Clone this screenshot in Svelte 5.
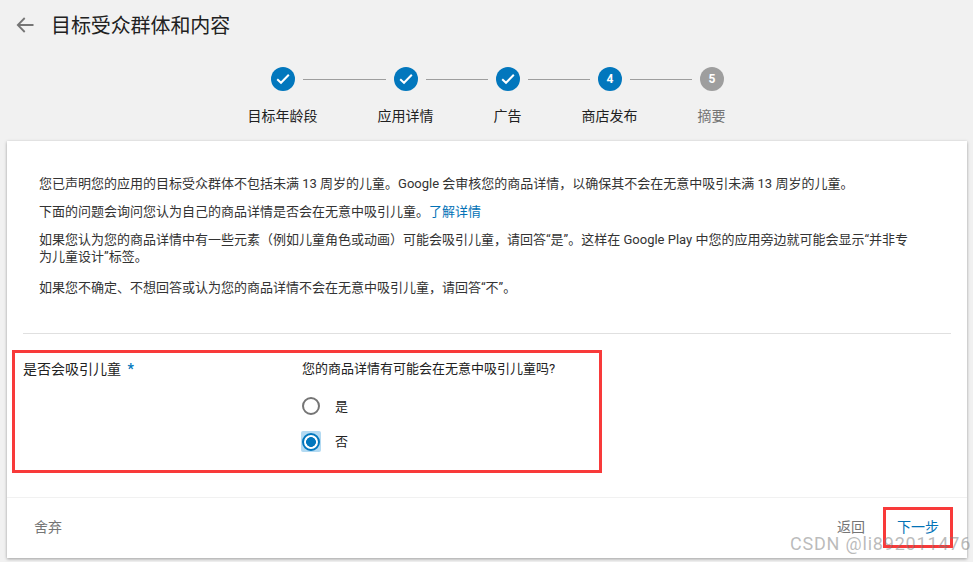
<script lang="ts">
  const steps = [
    { label: "目标年龄段", width: 70, state: "done" },
    { label: "应用详情", width: 56, state: "done" },
    { label: "广告", width: 28, state: "done" },
    { label: "商店发布", width: 56, state: "active" },
    { label: "摘要", width: 28, state: "todo" },
  ];

  function lineWidth(i: number) {
    return (steps[i].width + steps[i + 1].width) / 2 + 60 - 40;
  }
</script>

<div class="page">
  <header class="head">
    <svg class="head__back" width="18" height="16" viewBox="0 0 18 16" fill="none" stroke="#757575" stroke-width="1.8">
      <path d="M17.5 8H2M8.7 1 1.8 8l6.9 7" />
    </svg>
    <h1>目标受众群体和内容</h1>
  </header>

  <div class="stepper">
    <div class="stepper__track" style={`padding-left: ${(steps[0].width - 24) / 2}px`}>
      {#each steps as step, i}
        <span class="dot dot--{step.state}">
          {#if step.state === "done"}
            <svg width="14" height="12" viewBox="0 0 14 12" fill="none" stroke="#fff" stroke-width="2">
              <path d="M1.2 6.2 5 9.8 12.8 1.8" />
            </svg>
          {:else}
            {i + 1}
          {/if}
        </span>
        {#if i < steps.length - 1}
          <span class="line" style={`width: ${lineWidth(i)}px`}></span>
        {/if}
      {/each}
    </div>
    <div class="stepper__labels">
      {#each steps as step}
        <span class:muted={step.state === "todo"}>{step.label}</span>
      {/each}
    </div>
  </div>

  <main class="card">
    <section class="intro">
      <p>您已声明您的应用的目标受众群体不包括未满 13 周岁的儿童。Google 会审核您的商品详情，以确保其不会在无意中吸引未满 13 周岁的儿童。</p>
      <p>下面的问题会询问您认为自己的商品详情是否会在无意中吸引儿童。<a href="#more">了解详情</a></p>
      <p class="wrapped">如果您认为您的商品详情中有一些元素（例如儿童角色或动画）可能会吸引儿童，请回答“是”。这样在 Google Play 中您的应用旁边就可能会显示“并非专为儿童设计”标签。</p>
      <p>如果您不确定、不想回答或认为您的商品详情不会在无意中吸引儿童，请回答“不”。</p>
    </section>

    <section class="form">
      <div class="form__label">是否会吸引儿童 <span class="req">*</span></div>
      <div class="form__field">
        <div class="question">您的商品详情有可能会在无意中吸引儿童吗?</div>
        <div class="option">
          <span class="radio"></span>
          <span>是</span>
        </div>
        <div class="option">
          <span class="focus"><span class="radio radio--on"></span></span>
          <span>否</span>
        </div>
      </div>
    </section>

    <footer class="foot">
      <button class="btn">舍弃</button>
      <div class="foot__right">
        <button class="btn">返回</button>
        <button class="btn btn--next">下一步</button>
      </div>
    </footer>
  </main>

  <div class="mark mark--form"></div>
  <div class="mark mark--next"></div>
  <div class="watermark">CSDN @li892011476</div>
</div>

<style>
  :global(body) {
    background: #f1f1f1;
  }
  .page {
    position: relative;
    width: 973px;
    height: 562px;
    overflow: hidden;
    background: #f1f1f1;
    color: #212121;
    font-family: Roboto, "Noto Sans CJK SC", sans-serif;
    font-size: 13px;
  }
  .head {
    display: flex;
    align-items: center;
    height: 52px;
    padding-left: 16px;
  }
  .head__back {
    margin-right: 17px;
    margin-top: -3px;
  }
  h1 {
    margin: 0;
    font-size: 20px;
    font-weight: 400;
    line-height: 52px;
    letter-spacing: -0.1px;
  }
  .stepper {
    display: flex;
    flex-direction: column;
    align-items: center;
    height: 89px;
    padding-top: 15px;
    box-sizing: border-box;
  }
  .stepper__track {
    display: flex;
    align-items: center;
    align-self: flex-start;
    margin-left: 248px;
  }
  .dot {
    display: flex;
    align-items: center;
    justify-content: center;
    width: 24px;
    height: 24px;
    border-radius: 50%;
    background: #0277bd;
    color: #fff;
    font-size: 12px;
    font-weight: 700;
  }
  .dot--todo {
    background: #9e9e9e;
  }
  .line {
    height: 1px;
    margin: 0 8px;
    background: #9e9e9e;
  }
  .stepper__labels {
    display: flex;
    gap: 60px;
    margin-top: 15px;
    font-size: 14px;
    line-height: 20px;
  }
  .muted {
    color: #757575;
  }
  .card {
    display: flex;
    flex-direction: column;
    width: 960px;
    height: 417px;
    margin-left: 7px;
    background: #fff;
    box-shadow: 0 1px 3px rgba(0, 0, 0, 0.35);
  }
  .intro {
    margin: 0 16px;
    padding: 34px 16px 28px;
    height: 193px;
    box-sizing: border-box;
    border-bottom: 1px solid #e0e0e0;
    line-height: 17px;
  }
  .intro p {
    margin: 0 0 11px;
    width: 875px;
    color: #333;
  }
  .intro p.wrapped {
    margin-bottom: 14px;
  }
  a {
    color: #0272b6;
    text-decoration: none;
  }
  .form {
    display: flex;
    flex: 1;
    padding: 26px 16px 0;
    border-bottom: 1px solid #f1f1f1;
  }
  .form__label {
    width: 279px;
    font-size: 14px;
    line-height: 18px;
  }
  .req {
    color: #0277bd;
    font-weight: 700;
    margin-left: 3px;
  }
  .question {
    line-height: 18px;
    margin-bottom: 10px;
  }
  .option {
    display: flex;
    align-items: center;
    height: 35px;
    gap: 13px;
  }
  .radio {
    display: block;
    width: 14px;
    height: 14px;
    margin: 0 2px 0 0;
    border: 2px solid #757575;
    border-radius: 50%;
    box-sizing: content-box;
  }
  .focus {
    display: flex;
    align-items: center;
    justify-content: center;
    width: 20px;
    height: 21px;
    margin: 2px 1px 0 -1px;
    background: #b3daf2;
    border-radius: 2px;
  }
  .radio--on {
    margin: 0;
    border-color: #0277bd;
    background: radial-gradient(circle, #0277bd 0 4.6px, #fff 5.2px);
  }
  .foot {
    display: flex;
    align-items: center;
    justify-content: space-between;
    height: 60px;
    padding: 0 16px 4px 15px;
    box-sizing: border-box;
  }
  .foot__right {
    display: flex;
    align-items: center;
    gap: 8px;
  }
  .btn {
    padding: 0 12px;
    height: 32px;
    border: 0;
    background: none;
    color: #757575;
    font: inherit;
    font-size: 14px;
  }
  .btn--next {
    color: #0272b6;
  }
  .mark {
    position: absolute;
    border: 3px solid #f83a3a;
    box-sizing: border-box;
  }
  .mark--form {
    left: 12px;
    top: 350px;
    width: 590px;
    height: 123px;
  }
  .mark--next {
    left: 883px;
    top: 507px;
    width: 70px;
    height: 41px;
  }
  .watermark {
    position: absolute;
    left: 790px;
    top: 533px;
    color: rgba(120, 120, 120, 0.5);
    font-size: 18px;
    letter-spacing: 0.8px;
    white-space: nowrap;
  }
</style>
